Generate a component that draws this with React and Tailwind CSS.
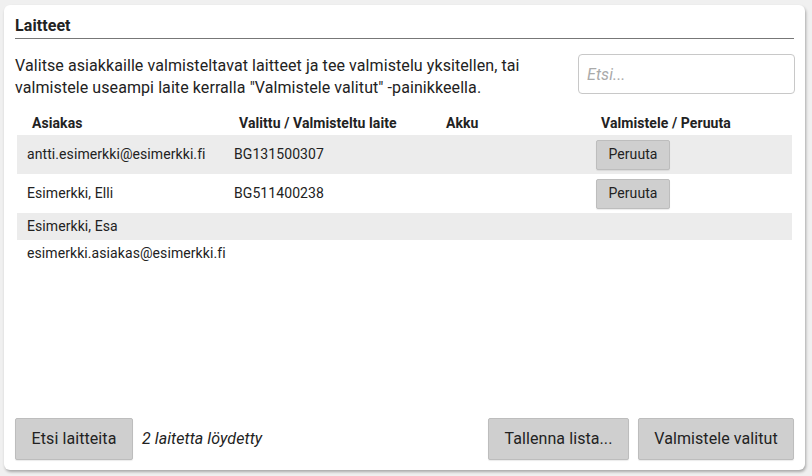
const rows = [
  { name: "antti.esimerkki@esimerkki.fi", device: "BG131500307", action: "Peruuta", tall: true },
  { name: "Esimerkki, Elli", device: "BG511400238", action: "Peruuta", tall: true },
  { name: "Esimerkki, Esa", device: "", action: null, tall: false },
  { name: "esimerkki.asiakas@esimerkki.fi", device: "", action: null, tall: false },
];

function GrayButton({ children, className = "" }) {
  return (
    <button className={`bg-[#cfcfcf] border border-[#bdbdbd] rounded-[2px] text-[#222] shadow-[0_1px_1px_rgba(0,0,0,0.08)] ${className}`}>
      {children}
    </button>
  );
}

export default function App() {
  return (
    <div className="w-[812px] h-[476px] bg-[#f0f0f0] pt-[5px] pl-[4px] font-['Roboto',sans-serif] text-[#222] tracking-[0.005em]">
      <div className="w-[801px] h-[465px] bg-white rounded-[6px] shadow-[1px_2px_3px_rgba(0,0,0,0.3)] px-[11px] pt-[11px] pb-[10px] flex flex-col">
        <div className="text-[16px] font-bold leading-[20px] pb-[2px] border-b border-[#777]">Laitteet</div>

        <div className="flex items-start justify-between mt-[15px]">
          <p className="w-[550px] text-[16px] leading-[22px] pt-[1px]">
            Valitse asiakkaille valmisteltavat laitteet ja tee valmistelu yksitellen, tai valmistele useampi laite kerralla "Valmistele valitut" -painikkeella.
          </p>
          <input
            placeholder="Etsi..."
            className="w-[217px] h-[40px] mr-[-1px] border border-[#c8c8c8] rounded-[4px] px-[8px] text-[16px] placeholder:italic placeholder:text-[#aaa] outline-none"
          />
        </div>

        <div className="mx-[2px] mt-[12px]">
          <div className="grid grid-cols-[207px_207px_155px_207px] h-[24px] items-center text-[14px] font-bold">
            <div className="pl-[15px]">Asiakas</div>
            <div className="pl-[15px]">Valittu / Valmisteltu laite</div>
            <div className="pl-[15px]">Akku</div>
            <div className="pl-[15px]">Valmistele / Peruuta</div>
          </div>
          {rows.map((r, i) => (
            <div
              key={i}
              className={`grid grid-cols-[207px_207px_155px_207px] items-center text-[14px] ${r.tall ? "h-[39px]" : "h-[27px]"} ${i % 2 === 0 ? "bg-[#ececec]" : "bg-white"}`}
            >
              <div className="pl-[10px]">{r.name}</div>
              <div className="pl-[10px]">{r.device}</div>
              <div />
              <div className="pl-[10px]">
                {r.action && <GrayButton className="w-[74px] h-[30px] text-[14px]">{r.action}</GrayButton>}
              </div>
            </div>
          ))}
        </div>

        <div className="mt-auto flex items-center">
          <GrayButton className="w-[118px] h-[42px] text-[16px]">Etsi laitteita</GrayButton>
          <span className="ml-[9px] text-[16px] italic">2 laitetta löydetty</span>
          <div className="ml-auto flex gap-[9px]">
            <GrayButton className="w-[141px] h-[42px] text-[16px]">Tallenna lista...</GrayButton>
            <GrayButton className="w-[156px] h-[42px] text-[16px]">Valmistele valitut</GrayButton>
          </div>
        </div>
      </div>
    </div>
  );
}
